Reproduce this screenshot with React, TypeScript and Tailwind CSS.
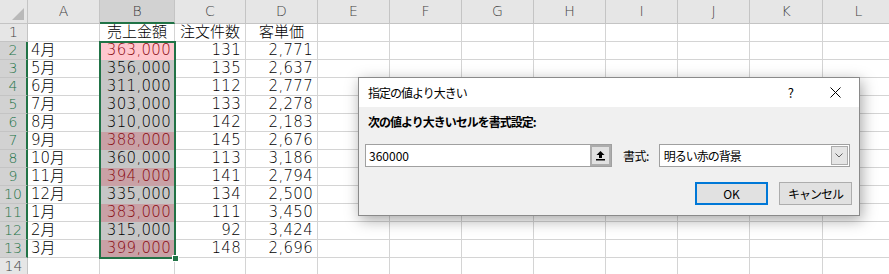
import React from 'react'

// Excel 風のシート + 「指定の値より大きい」条件付き書式ダイアログ
const COLS = ['A', 'B', 'C', 'D', 'E', 'F', 'G', 'H', 'I', 'J', 'K', 'L']

type Row = { month: string; sales: string; orders: string; unit: string; hit: boolean }

const ROWS: Row[] = [
  { month: '4月', sales: '363,000', orders: '131', unit: '2,771', hit: true },
  { month: '5月', sales: '356,000', orders: '135', unit: '2,637', hit: false },
  { month: '6月', sales: '311,000', orders: '112', unit: '2,777', hit: false },
  { month: '7月', sales: '303,000', orders: '133', unit: '2,278', hit: false },
  { month: '8月', sales: '310,000', orders: '142', unit: '2,183', hit: false },
  { month: '9月', sales: '388,000', orders: '145', unit: '2,676', hit: true },
  { month: '10月', sales: '360,000', orders: '113', unit: '3,186', hit: false },
  { month: '11月', sales: '394,000', orders: '141', unit: '2,794', hit: true },
  { month: '12月', sales: '335,000', orders: '134', unit: '2,500', hit: false },
  { month: '1月', sales: '383,000', orders: '111', unit: '3,450', hit: true },
  { month: '2月', sales: '315,000', orders: '92', unit: '3,424', hit: false },
  { month: '3月', sales: '399,000', orders: '148', unit: '2,696', hit: true },
]

const cell = 'border-r border-b border-[#d4d4d4] flex items-center overflow-hidden whitespace-nowrap'
const hdr = 'bg-[#e6e6e6] border-r border-b border-[#c4c4c4] flex items-center justify-center text-[14px] text-[#444]'

function EmptyCells({ from }: { from: number }): React.ReactElement {
  return (
    <>
      {COLS.slice(from).map((c) => (
        <div key={c} className={cell} />
      ))}
    </>
  )
}

function Sheet(): React.ReactElement {
  return (
    <div className="relative">
      <div className="grid grid-cols-[28px_72px_75px_71px_72px_72px_72px_72px_72px_72px_72px_73px_72px] grid-rows-[24px_repeat(14,18px)] text-[15px] font-light text-black">
        {/* 列見出し */}
        <div className="bg-[#e6e6e6] border-r border-b border-[#c4c4c4] relative">
          <div className="absolute right-[3px] bottom-[3px] w-0 h-0 border-l-[12px] border-l-transparent border-b-[12px] border-b-[#b9b9b9]" />
        </div>
        {COLS.map((c) =>
          c === 'B' ? (
            <div
              key={c}
              className="bg-[#d2d2d2] border-r border-[#c4c4c4] border-b-2 border-b-[#217346] flex items-center justify-center text-[14px] text-[#3a3a3a]"
            >
              {c}
            </div>
          ) : (
            <div key={c} className={hdr}>
              {c}
            </div>
          ),
        )}

        {/* 1 行目 */}
        <div className={hdr}>1</div>
        <div className={cell} />
        <div className={`${cell} justify-center`}>売上金額</div>
        <div className={`${cell} justify-center`}>注文件数</div>
        <div className={`${cell} justify-center`}>客単価</div>
        <EmptyCells from={4} />

        {ROWS.map((r, i) => {
          const active = i === 0
          const bBg = active
            ? 'bg-[#ffc7ce] border-b-[#ffc7ce]'
            : r.hit
              ? 'bg-[#c9a1a6] border-b-[#c9a1a6]'
              : 'bg-[#c6c6c6] border-b-[#c6c6c6]'
          const bText = r.hit ? 'text-[#8a0a12]' : 'text-black'
          return (
            <React.Fragment key={r.month}>
              <div className="bg-[#d2d2d2] border-b border-[#c4c4c4] border-r-2 border-r-[#217346] flex items-center justify-center text-[14px] text-[#217346]">
                {i + 2}
              </div>
              <div className={`${cell} pl-[3px]`}>{r.month}</div>
              <div className={`${cell} ${bBg} ${bText} justify-end pr-[3px] tracking-[0.3px]`}>{r.sales}</div>
              <div className={`${cell} justify-end pr-[4px] tracking-[0.3px]`}>{r.orders}</div>
              <div className={`${cell} justify-end pr-[4px] tracking-[0.3px]`}>{r.unit}</div>
              <EmptyCells from={4} />
            </React.Fragment>
          )
        })}

        {/* 14 行目 */}
        <div className={hdr}>14</div>
        <EmptyCells from={0} />
      </div>

      {/* 選択範囲 B2:B13 の枠 */}
      <div className="absolute left-[99px] top-[41px] w-[77px] h-[218px] border-2 border-[#217346] pointer-events-none">
        <div className="absolute -right-[5px] -bottom-[5px] w-[7px] h-[7px] bg-[#217346] border border-white" />
      </div>
    </div>
  )
}

function RefIcon(): React.ReactElement {
  return (
    <svg width="11" height="11" viewBox="0 0 11 11">
      <path d="M5.5 1 L9.5 5 L7 5 L7 8 L4 8 L4 5 L1.5 5 Z" fill="#000" />
      <rect x="1" y="9" width="9" height="1.5" fill="#000" />
    </svg>
  )
}

function Dialog(): React.ReactElement {
  const ui = 'font-["Noto_Sans_CJK_JP","Noto_Sans",sans-serif]'
  return (
    <div
      className={`absolute left-[358px] top-[77px] w-[502px] h-[139px] border border-[#8a8a8a] bg-[#f0f0f0] shadow-[2px_4px_14px_rgba(0,0,0,0.35)] flex flex-col text-[12px] text-black ${ui}`}
    >
      <div className="h-[29px] bg-white flex items-center pl-[9px] pr-[14px]">
        <span className="tracking-[-1px]">指定の値より大きい</span>
        <span className="ml-auto mr-[36px] text-[13px]">?</span>
        <svg width="11" height="11" viewBox="0 0 11 11" className="mr-[4px]">
          <path d="M0.5 0.5 L10.5 10.5 M10.5 0.5 L0.5 10.5" stroke="#000" strokeWidth="1" />
        </svg>
      </div>
      <div className="flex-1 px-[6px] pt-[7px]">
        <div className="pl-[3px] font-bold tracking-[-1px] h-[16px] leading-[16px]">次の値より大きいセルを書式設定:</div>
        <div className="mt-[14px] flex items-center h-[23px]">
          <div className="w-[247px] h-[23px] border border-[#a0a0a0] bg-white flex items-center">
            <span className="pl-[3px] flex-1">360000</span>
            <div className="w-[21px] h-[21px] bg-[#e1e1e1] border-2 border-[#adadad] flex items-center justify-center">
              <RefIcon />
            </div>
          </div>
          <span className="ml-[11px] tracking-[-0.5px]">書式:</span>
          <div className="ml-[10px] w-[191px] h-[23px] border border-[#a0a0a0] bg-white flex items-center">
            <span className="pl-[4px] flex-1 tracking-[-1px]">明るい赤の背景</span>
            <div className="w-[17px] h-[19px] mr-px bg-[#e5e5e5] border border-[#acacac] flex items-center justify-center">
              <svg width="8" height="5" viewBox="0 0 8 5">
                <path d="M0.5 0.5 L4 4 L7.5 0.5" stroke="#606060" fill="none" strokeWidth="1" />
              </svg>
            </div>
          </div>
        </div>
        <div className="mt-[15px] flex justify-end gap-[11px] pr-px">
          <div className="w-[73px] h-[23px] bg-[#e1e1e1] border-2 border-[#0078d7] flex items-center justify-center">OK</div>
          <div className="w-[73px] h-[23px] bg-[#e1e1e1] border border-[#adadad] flex items-center justify-center tracking-[-1px]">キャンセル</div>
        </div>
      </div>
    </div>
  )
}

export default function App(): React.ReactElement {
  return (
    <div className='relative w-[889px] h-[274px] overflow-hidden bg-white font-["DejaVu_Sans","Noto_Sans_CJK_JP",sans-serif]'>
      <Sheet />
      <Dialog />
    </div>
  )
}
